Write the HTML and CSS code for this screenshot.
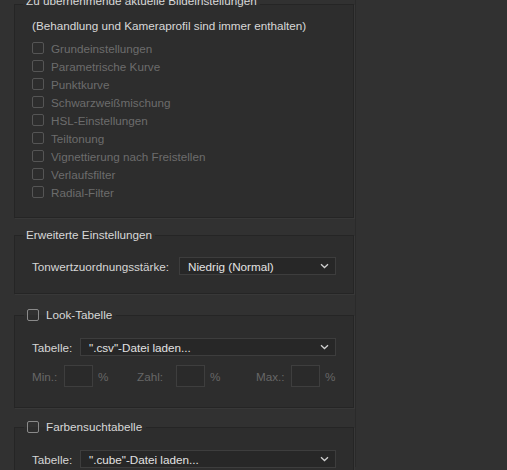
FILE: index.html
```html
<!DOCTYPE html>
<html lang="de">
<head>
<meta charset="utf-8">
<link rel="stylesheet" href="styles.css">
</head>
<body>
<div class="panel">
  <fieldset class="group g1">
    <legend class="title title-top">Zu übernehmende aktuelle Bildeinstellungen</legend>
    <div class="note">(Behandlung und Kameraprofil sind immer enthalten)</div>
    <ul class="checks">
      <li><span class="cb"></span>Grundeinstellungen</li>
      <li><span class="cb"></span>Parametrische Kurve</li>
      <li><span class="cb"></span>Punktkurve</li>
      <li><span class="cb"></span>Schwarzweißmischung</li>
      <li><span class="cb"></span>HSL-Einstellungen</li>
      <li><span class="cb"></span>Teiltonung</li>
      <li><span class="cb"></span>Vignettierung nach Freistellen</li>
      <li><span class="cb"></span>Verlaufsfilter</li>
      <li><span class="cb"></span>Radial-Filter</li>
    </ul>
  </fieldset>

  <fieldset class="group g2">
    <legend class="title">Erweiterte Einstellungen</legend>
    <div class="row">
      <span class="label lab-tone">Tonwertzuordnungsstärke:</span>
      <div class="select sel-tone"><span>Niedrig (Normal)</span><svg class="chev" width="9" height="6" viewBox="0 0 9 6"><path d="M1 1.2 L4.5 4.5 L8 1.2" fill="none" stroke="#d0d0d0" stroke-width="1.3"/></svg></div>
    </div>
  </fieldset>

  <fieldset class="group g3">
    <legend class="title check-title"><span class="cb cb-on"></span>Look-Tabelle</legend>
    <div class="row">
      <span class="label lab-tab">Tabelle:</span>
      <div class="select sel-wide"><span>".csv"-Datei laden...</span><svg class="chev" width="9" height="6" viewBox="0 0 9 6"><path d="M1 1.2 L4.5 4.5 L8 1.2" fill="none" stroke="#d0d0d0" stroke-width="1.3"/></svg></div>
    </div>
    <div class="row nums">
      <span class="dim lab-min">Min.:</span><span class="box"></span><span class="dim pct pct-1">%</span>
      <span class="dim lab-zahl">Zahl:</span><span class="box"></span><span class="dim pct pct-2">%</span>
      <span class="dim lab-max">Max.:</span><span class="box"></span><span class="dim pct">%</span>
    </div>
  </fieldset>

  <fieldset class="group g4">
    <legend class="title check-title"><span class="cb cb-on"></span>Farbensuchtabelle</legend>
    <div class="row">
      <span class="label lab-tab">Tabelle:</span>
      <div class="select sel-wide"><span>".cube"-Datei laden...</span><svg class="chev" width="9" height="6" viewBox="0 0 9 6"><path d="M1 1.2 L4.5 4.5 L8 1.2" fill="none" stroke="#d0d0d0" stroke-width="1.3"/></svg></div>
    </div>
  </fieldset>
</div>
</body>
</html>
```

FILE: styles.css
```css
html, body {
  margin: 0;
  padding: 0;
  background: #313131;
  height: 470px;
  overflow: hidden;
}
body {
  font-family: "Liberation Sans", Arial, sans-serif;
  font-size: 11.7px;
  color: #d6d6d6;
}
.panel {
  width: 356px;
  height: 470px;
  border-right: 1px solid #2a2a2a;
  box-sizing: border-box;
  padding-left: 14px;
}
.group {
  width: 340px;
  box-sizing: border-box;
  margin: 0;
  padding: 0 0 0 17px;
  border: 1px solid #252525;
  box-shadow: 1px 1px 0 #383838;
  background: #2d2d2d;
  min-inline-size: 0;
}
.title {
  padding: 0 3px;
  margin-left: -9px;
  line-height: 14px;
  height: 14px;
  color: #d8d8d8;
  white-space: nowrap;
}
.title-top {
  position: relative;
  top: -3px;
}
.check-title {
  display: flex;
  align-items: center;
  gap: 7px;
  margin-left: -8px;
  padding: 0 4px 0 3px;
}
.g1 {
  margin-top: -3px;
  padding-top: 6px;
  padding-bottom: 16px;
}
.g2 {
  margin-top: 10px;
  padding-top: 15px;
  padding-bottom: 18px;
}
.g3 {
  margin-top: 14px;
  padding-top: 16px;
  padding-bottom: 20px;
}
.g4 {
  margin-top: 12px;
  padding-top: 16px;
  padding-bottom: 20px;
}
.note {
  line-height: 18px;
  color: #d8d8d8;
}
.checks {
  list-style: none;
  margin: 4px 0 0 0;
  padding: 0;
}
.checks li {
  display: flex;
  align-items: center;
  gap: 7px;
  height: 18px;
  color: #6c6c6c;
}
.cb {
  display: inline-block;
  width: 12px;
  height: 12px;
  box-sizing: border-box;
  border: 1px solid #555;
  border-radius: 2px;
  flex: none;
}
.cb-on {
  border-color: #8a8a8a;
}
.row {
  display: flex;
  align-items: center;
}
.label {
  flex: none;
  color: #d6d6d6;
}
.lab-tone {
  width: 147px;
}
.lab-tab {
  width: 48px;
}
.select {
  display: flex;
  align-items: center;
  justify-content: space-between;
  height: 18px;
  box-sizing: border-box;
  border: 1px solid #3d3d3d;
  background: #272727;
  padding: 0 6px 0 8px;
  color: #e2e2e2;
}
.sel-tone {
  width: 157px;
}
.sel-wide {
  width: 256px;
}
.chev {
  display: block;
}
.nums {
  margin-top: 9px;
  height: 22px;
}
.dim {
  color: #676767;
  flex: none;
}
.box {
  flex: none;
  width: 29px;
  height: 22px;
  box-sizing: border-box;
  border: 1px solid #3e3e3e;
  background: #2a2a2a;
}
.pct {
  margin-left: 5px;
}
.pct-1 {
  width: 39px;
}
.pct-2 {
  width: 46px;
}
.lab-min {
  width: 32px;
}
.lab-zahl {
  width: 39px;
}
.lab-max {
  width: 35px;
}
```
